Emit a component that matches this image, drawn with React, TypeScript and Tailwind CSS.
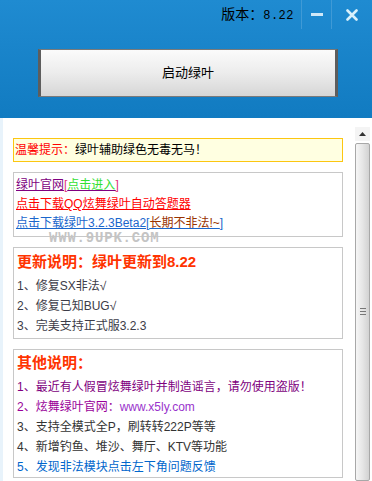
import React from "react";

const font = "font-['Liberation_Sans','Noto_Sans_CJK_SC',sans-serif]";

const updates = ["1、修复SX非法√", "2、修复已知BUG√", "3、完美支持正式服3.2.3"];

export default function App() {
  return (
    <div className={`w-[372px] h-[481px] overflow-hidden bg-white flex flex-col ${font}`}>
      {/* Header */}
      <header className="h-[118px] shrink-0 bg-gradient-to-b from-[#1f8bd1] to-[#117bc1] flex flex-col">
        <div className="h-[29px] flex items-stretch justify-end">
          <span className="self-center pr-[7px] text-[14px] text-black flex items-baseline">
            版本：<span className="font-['Liberation_Mono',monospace] text-[12px] tracking-[0.5px]">8.22</span>
          </span>
          <div className="w-[30px] border-l border-[#3f9ad6] flex items-center justify-center">
            <span className="block w-[12px] h-[3px] bg-[#cfe8f8]" />
          </div>
          <div className="w-[41px] border-l border-[#3f9ad6] flex items-center justify-center">
            <svg width="12" height="12" viewBox="0 0 12 12">
              <path d="M1.5 1.5 L10.5 10.5 M10.5 1.5 L1.5 10.5" stroke="#d8f0fb" strokeWidth="2.6" strokeLinecap="round" />
            </svg>
          </div>
        </div>
        <div className="pt-[20px] px-[38px] pr-[34px]">
          <button className="w-full h-[48px] bg-gradient-to-b from-[#fbfbfb] via-[#ececec] to-[#d6d6d6] border-x-[3px] border-x-[#5d5d5d] border-y border-y-[#7a7a7a] text-[13px] text-black">
            启动绿叶
          </button>
        </div>
      </header>

      {/* Body */}
      <div className="flex-1 flex min-h-0 border-l-[3px] border-[#e8f3fb]">
        <div className="relative flex-1 pl-[10px] pr-[11px] pt-[20px] flex flex-col gap-[10px] text-[12px]">
          <div className="h-[24px] border border-[#fcc611] bg-[#ffffe1] flex items-center px-[1px] text-[12px]">
            <span className="text-[#ff0000]">温馨提示：</span>
            <span className="text-black">绿叶辅助绿色无毒无马！</span>
          </div>

          <div className="border border-[#c8c8c8] px-[2px] pt-[3px] pb-[3px] flex flex-col leading-[19px]">
            <a className="underline text-[#800080] w-fit">
              绿叶官网<span className="text-[#e0307a]">[</span>
              <span className="text-[#33e033]">点击进入</span>
              <span className="text-[#e0307a]">]</span>
            </a>
            <a className="underline text-[#ff0000] w-fit">点击下载QQ炫舞绿叶自动答题器</a>
            <a className="underline text-[#1a66cc] w-fit">
              点击下载绿叶3.2.3Beta2[<span className="text-[#993300]">长期不非法!~</span>]
            </a>
          </div>

          <div className="border border-[#c8c8c8] px-[3px] pt-[3px] pb-[2px] flex flex-col">
            <p className="text-[15px] font-bold text-[#ff3300] leading-[22px] mb-[3px]">更新说明：绿叶更新到8.22</p>
            {updates.map(u => (
              <p key={u} className="leading-[20px] text-[#3c3c48]">{u}</p>
            ))}
          </div>

          <div className="border border-[#c8c8c8] px-[3px] pt-[2px] flex flex-col leading-[20px]">
            <p className="text-[15px] font-bold text-[#ff3300] leading-[22px] mb-[3px]">其他说明：</p>
            <p className="text-[#800080]">1、最近有人假冒炫舞绿叶并制造谣言，请勿使用盗版！</p>
            <p className="text-[#990099]">
              2、炫舞绿叶官网：<span className="text-[#9933cc]">www.x5ly.com</span>
            </p>
            <p className="text-[#333333]">3、支持全模式全P，刷转转222P等等</p>
            <p className="text-[#333333]">4、新增钓鱼、堆沙、舞厅、KTV等功能</p>
            <p className="text-[#0066cc]">5、发现非法模块点击左下角问题反馈</p>
          </div>

          {/* watermark */}
          <span className="absolute left-[46px] top-[113px] text-[14px] font-bold tracking-[0.8px] text-[#c4c4c4] font-['Liberation_Mono',monospace] leading-none">
            WWW.9UPK.COM
          </span>
        </div>

        {/* Scrollbar */}
        <div className="w-[18px] shrink-0 flex flex-col pt-[9px] pl-[1px] pr-[2px]">
          <div className="h-[14px] flex items-center justify-center bg-[#f4f4f4]">
            <svg width="7" height="4" viewBox="0 0 7 4">
              <path d="M0 4 L3.5 0 L7 4 Z" fill="#333" />
            </svg>
          </div>
          <div className="flex-1 mt-[2px] border border-[#a8a8a8] rounded-[2px] bg-gradient-to-r from-[#f6f6f6] via-[#e6e6e6] to-[#d2d2d2] flex flex-col items-center pt-[164px] gap-[2px]">
            <span className="block w-[6px] h-px bg-[#777]" />
            <span className="block w-[6px] h-px bg-[#777]" />
            <span className="block w-[6px] h-px bg-[#777]" />
          </div>
        </div>
      </div>
    </div>
  );
}
